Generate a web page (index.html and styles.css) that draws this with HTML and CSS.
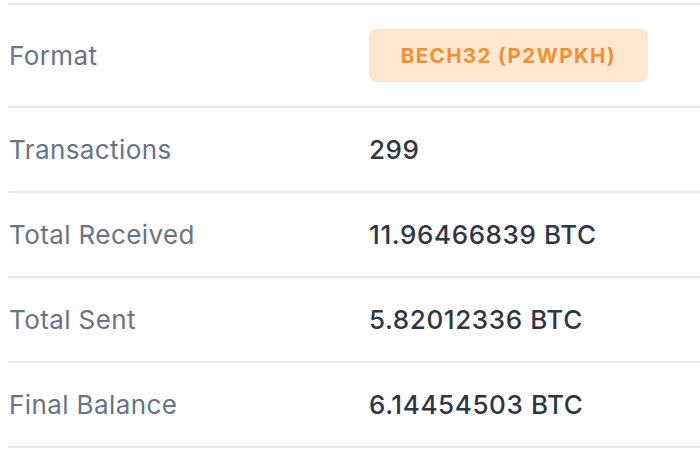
FILE: index.html
```html
<!DOCTYPE html>
<html>
<head>
<meta charset="utf-8">
<link rel="stylesheet" href="styles.css">
</head>
<body>
<div class="details">
  <div class="row row-format">
    <div class="label">Format</div>
    <div class="value"><span class="badge">BECH32 (P2WPKH)</span></div>
  </div>
  <div class="row">
    <div class="label">Transactions</div>
    <div class="value">299</div>
  </div>
  <div class="row">
    <div class="label">Total Received</div>
    <div class="value">11.96466839 BTC</div>
  </div>
  <div class="row">
    <div class="label">Total Sent</div>
    <div class="value">5.82012336 BTC</div>
  </div>
  <div class="row">
    <div class="label">Final Balance</div>
    <div class="value">6.14454503 BTC</div>
  </div>
</div>
</body>
</html>
```
FILE: styles.css
```css
html, body {
  margin: 0;
  padding: 0;
  background: #ffffff;
}
body {
  font-family: Inter, "Noto Sans", sans-serif;
  padding-top: 3px;
}
.details {
  margin-left: 8px;
  border-top: 2px solid #e7e9ef;
}
.row {
  display: grid;
  grid-template-columns: 361px 1fr;
  align-items: center;
  height: 83px;
  border-bottom: 2px solid #e7e9ef;
}
.row-format {
  height: 101px;
}
.label {
  padding-left: 1px;
  font-size: 26px;
  letter-spacing: 0.4px;
  color: #697386;
}
.value {
  font-size: 26px;
  font-weight: 500;
  letter-spacing: 0.6px;
  color: #2e3646;
}
.badge {
  display: inline-flex;
  align-items: center;
  justify-content: center;
  width: 279px;
  height: 53px;
  border-radius: 7px;
  background: #fee7d0;
  color: #f5902e;
  font-size: 20.5px;
  font-weight: 700;
  letter-spacing: 1.4px;
}
```
